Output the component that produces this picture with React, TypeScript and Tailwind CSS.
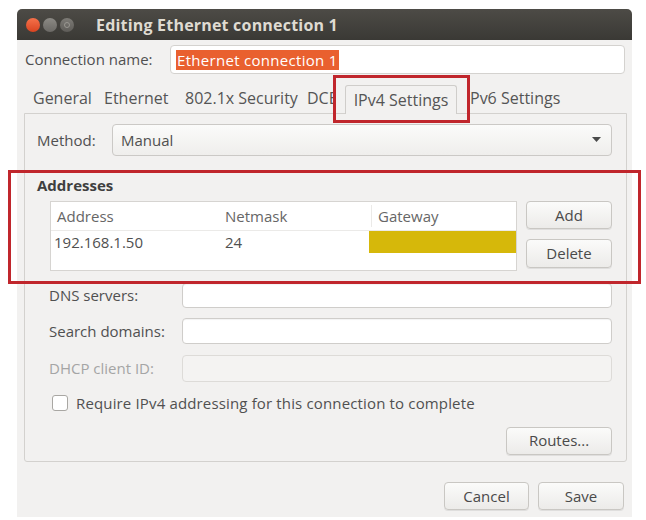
import React from "react";

const font = { fontFamily: '"Open Sans", "Liberation Sans", sans-serif' };

function Btn({ children, className = "" }: { children: React.ReactNode; className?: string }) {
  return (
    <div
      className={
        "flex items-center justify-center rounded-[4px] border border-[#c9c7c3] bg-gradient-to-b from-[#fbfbfa] to-[#ecebe9] text-[15px] text-[#4a4a4a] shadow-[0_1px_0_rgba(0,0,0,0.08)] " +
        className
      }
    >
      {children}
    </div>
  );
}

function Input({ className = "", disabled = false }: { className?: string; disabled?: boolean }) {
  return (
    <div
      className={
        "rounded-[4px] border " +
        (disabled ? "border-[#dddbd8] bg-[#f4f3f2] " : "border-[#cfcdca] bg-white shadow-[inset_0_1px_1px_rgba(0,0,0,0.05)] ") +
        className
      }
    />
  );
}

export default function App() {
  return (
    <div className="relative h-[520px] w-[646px] overflow-hidden bg-white" style={font}>
      <div className="ml-[17px] mt-[9px] flex h-[508px] w-[615px] flex-col">
        {/* title bar */}
        <div className="flex h-[31px] items-center rounded-t-[5px] bg-gradient-to-b from-[#4d4b46] to-[#3a3935] pl-[9px]">
          <div className="h-[14px] w-[14px] rounded-full bg-gradient-to-b from-[#f5714a] to-[#d9431f]" />
          <div className="ml-[3px] h-[14px] w-[14px] rounded-full bg-gradient-to-b from-[#8c8a85] to-[#6b6965]" />
          <div className="ml-[3px] flex h-[14px] w-[14px] items-center justify-center rounded-full bg-gradient-to-b from-[#7d7b76] to-[#5e5c58]">
            <div className="h-[6px] w-[6px] rounded-full border border-[#9a9892]" />
          </div>
          <div className="ml-[22px] text-[16px] font-bold tracking-[0.2px] text-[#dfdbd2]">Editing Ethernet connection 1</div>
        </div>
        {/* body */}
        <div className="flex flex-1 flex-col bg-[#f2f1f0] text-[15px] text-[#505050]">
          {/* connection name */}
          <div className="mt-[5px] flex h-[29px] items-center pl-[8px] pr-[7px]">
            <div className="w-[145px]">Connection name:</div>
            <div className="flex h-[29px] flex-1 items-center rounded-[4px] border border-[#d4d2cf] bg-white pl-[5px]">
              <span className="bg-[#e9602f] px-[1px] leading-[20px] tracking-[0.3px] text-white">Ethernet connection 1</span>
            </div>
          </div>
          {/* tabs */}
          <div className="relative mt-[13px] flex h-[26px] items-end whitespace-nowrap pl-[16px] text-[16px] text-[#555]">
            <div className="w-[71px] pb-[3px]">General</div>
            <div className="w-[81px] pb-[3px]">Ethernet</div>
            <div className="w-[122px] pb-[3px]">802.1x Security</div>
            <div className="w-[26px] overflow-hidden pb-[3px]">DCB</div>
            <div className="w-[12px]" />
            <div className="relative -mb-[1px] flex h-[29px] w-[112px] items-center justify-center rounded-t-[3px] border border-b-0 border-[#cfcdca] bg-[#f2f1f0]">
              IPv4 Settings
            </div>
            <div className="pb-[3px] pl-[13px]">Pv6 Settings</div>
          </div>
          {/* panel */}
          <div className="ml-[7px] mr-[5px] flex h-[349px] flex-col rounded-b-[3px] border border-[#d3d1ce] bg-[#f2f1f0] pl-[12px] pr-[14px]">
            <div className="mt-[10px] flex h-[32px] items-center">
              <div className="w-[75px]">Method:</div>
              <div className="flex h-[32px] flex-1 items-center justify-between rounded-[4px] border border-[#cbc9c6] bg-gradient-to-b from-[#fbfbfa] to-[#efeeec] pl-[8px] pr-[10px]">
                <span>Manual</span>
                <svg width="9" height="6" viewBox="0 0 9 6">
                  <path d="M0 0 L9 0 L4.5 5 Z" fill="#4a4a4a" />
                </svg>
              </div>
            </div>
            <div className="mt-[20px] font-bold leading-[18px] text-[#3f3f3f]">Addresses</div>
            <div className="mt-[7px] flex">
              <div className="ml-[13px] h-[70px] w-[467px] border border-[#d6d4d1] bg-white">
                <div className="flex h-[29px] items-center border-b border-[#ebeae8] text-[#666]">
                  <div className="w-[171px] pl-[6px]">Address</div>
                  <div className="w-[150px] border-r border-[#ebeae8] pl-[3px]">Netmask</div>
                  <div className="pl-[6px]">Gateway</div>
                </div>
                <div className="flex h-[22px] items-center">
                  <div className="w-[171px] pl-[3px]">192.168.1.50</div>
                  <div className="w-[147px] pl-[3px]">24</div>
                  <div className="h-[22px] flex-1 bg-[#d6b80a]" />
                </div>
              </div>
              <div className="ml-[9px] flex flex-1 flex-col gap-[10px]">
                <Btn className="h-[28px]">Add</Btn>
                <Btn className="h-[29px]">Delete</Btn>
              </div>
            </div>
            <div className="mt-[12px] flex h-[25px] items-center">
              <div className="w-[145px] pl-[12px]">DNS servers:</div>
              <Input className="h-[25px] flex-1" />
            </div>
            <div className="mt-[10px] flex h-[26px] items-center">
              <div className="w-[145px] pl-[12px]">Search domains:</div>
              <Input className="h-[26px] flex-1" />
            </div>
            <div className="mt-[11px] flex h-[27px] items-center">
              <div className="w-[145px] pl-[12px] text-[#a5a5a5]">DHCP client ID:</div>
              <Input className="h-[27px] flex-1" disabled />
            </div>
            <div className="mt-[10px] flex items-center pl-[15px]">
              <div className="h-[16px] w-[16px] rounded-[3px] border border-[#a9a7a3] bg-white" />
              <div className="ml-[8px] tracking-[0.15px]">Require IPv4 addressing for this connection to complete</div>
            </div>
            <div className="mt-[12px] flex justify-end">
              <Btn className="h-[28px] w-[106px]">Routes...</Btn>
            </div>
          </div>
          {/* bottom buttons */}
          <div className="mt-[20px] flex justify-end gap-[9px] pr-[8px]">
            <Btn className="h-[28px] w-[85px]">Cancel</Btn>
            <Btn className="h-[28px] w-[86px]">Save</Btn>
          </div>
        </div>
      </div>
      {/* annotation boxes */}
      <div className="pointer-events-none absolute left-[333px] top-[75px] h-[48px] w-[137px] border-[3px] border-[#c0262c]" />
      <div className="pointer-events-none absolute left-[8px] top-[170px] h-[114px] w-[633px] border-[3px] border-[#c0262c]" />
    </div>
  );
}
